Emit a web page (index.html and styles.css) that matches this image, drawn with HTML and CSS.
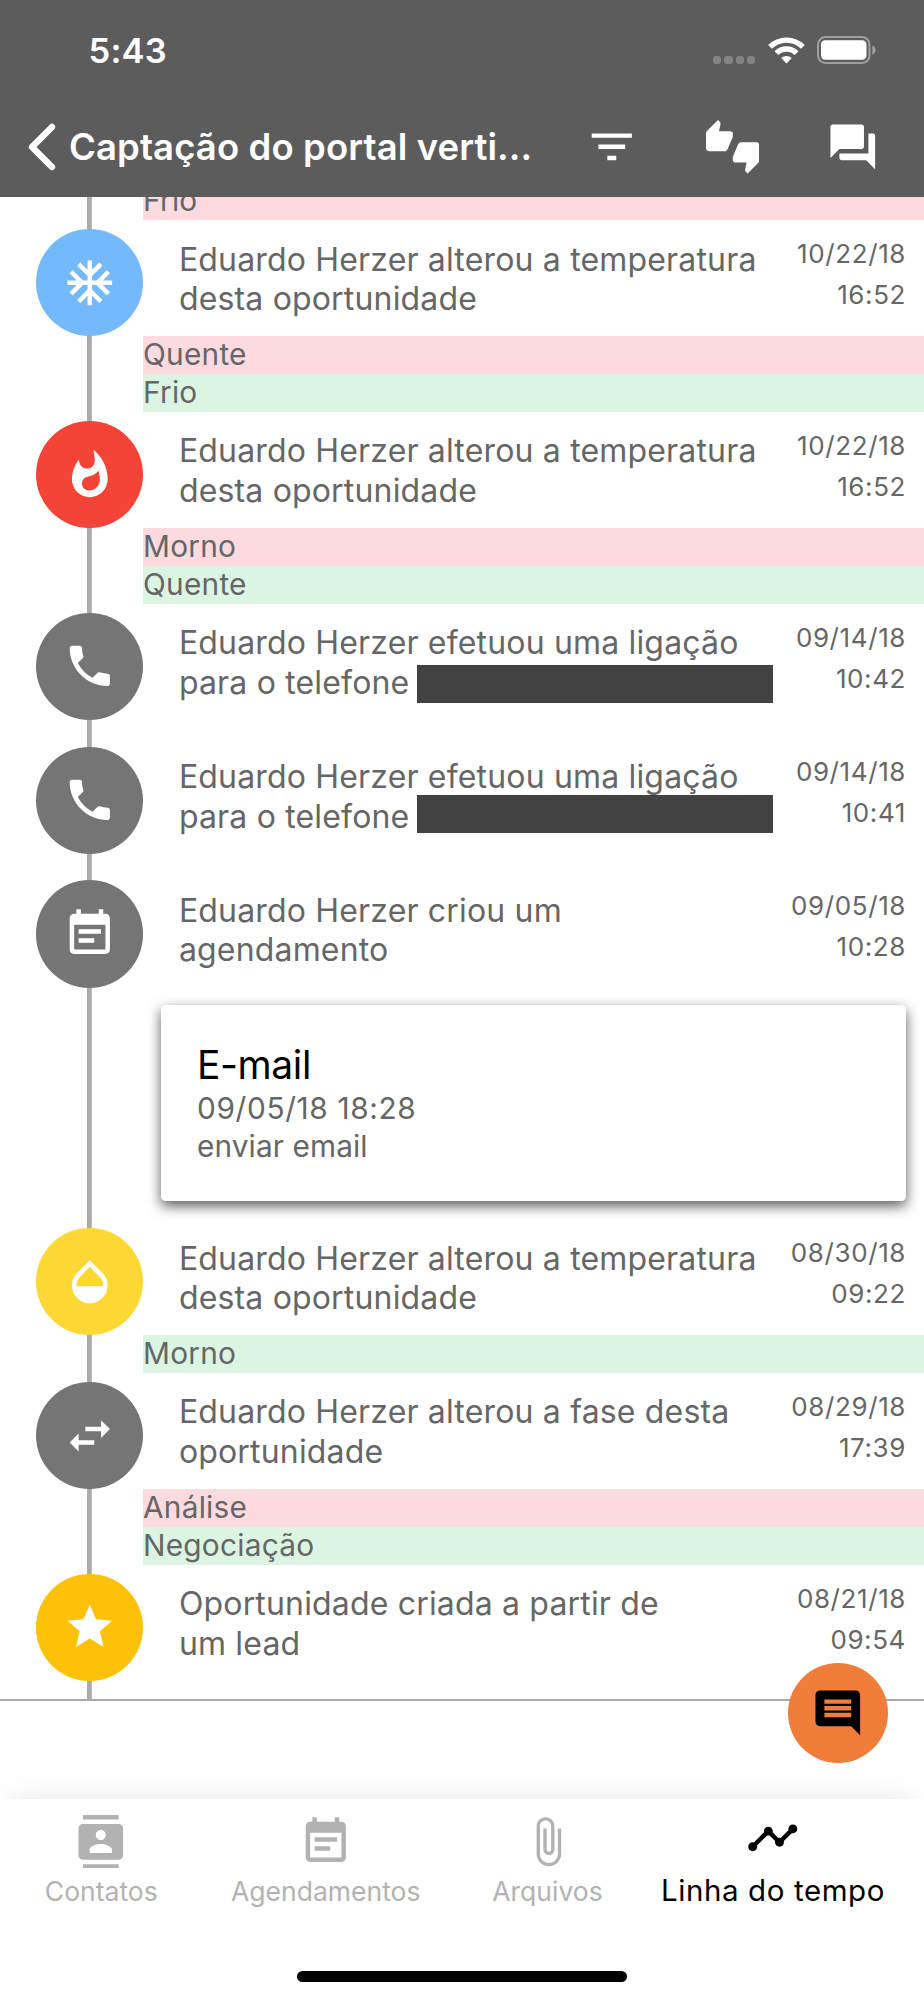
FILE: index.html
```html
<!DOCTYPE html>
<html lang="pt-BR">
<head>
<meta charset="utf-8">
<title>Linha do tempo</title>
<link rel="stylesheet" href="styles.css">
</head>
<body>
<svg class="defs" aria-hidden="true">
  <symbol id="phone" viewBox="0 0 24 24"><path d="M6.62 10.79c1.44 2.83 3.76 5.14 6.59 6.59l2.2-2.2c.27-.27.67-.36 1.02-.24 1.12.37 2.33.57 3.57.57.55 0 1 .45 1 1V20c0 .55-.45 1-1 1-9.39 0-17-7.61-17-17 0-.55.45-1 1-1h3.5c.55 0 1 .45 1 1 0 1.25.2 2.45.57 3.57.11.35.03.74-.25 1.02l-2.2 2.2z"/></symbol>
  <symbol id="note" viewBox="0 0 24 24"><path d="M17 10H7v2h10v-2zM19 3h-1V1h-2v2H8V1H6v2H5c-1.11 0-2 .9-2 2v14c0 1.1.89 2 2 2h14c1.1 0 2-.9 2-2V5c0-1.1-.9-2-2-2zm0 16H5V8h14v11zM14 14H7v2h7v-2z"/></symbol>
</svg>
<div class="screen">
  <header class="header">
    <div class="status">
      <span class="clock">5:43</span>
      <div class="signal"><i></i><i></i><i></i><i></i></div>
      <svg class="wifi" viewBox="0 0 37 27">
        <path d="M2.1 9.9a23.2 23.2 0 0 1 32.8 0M8.4 16.2a14.3 14.3 0 0 1 20.2 0" fill="none" stroke="#fff" stroke-width="5.4"/>
        <path d="M18.5 26.4l-5.3-5.4a7.7 7.7 0 0 1 10.6 0z" fill="#fff"/>
      </svg>
      <svg class="battery" viewBox="0 0 60 28">
        <rect x="1" y="1" width="51.5" height="26" rx="7.5" fill="none" stroke="#9f9f9f" stroke-width="2"/>
        <rect x="4" y="4.2" width="45.5" height="19.6" rx="4.2" fill="#fff"/>
        <path d="M55.3 9.5c4.4 1.8 4.4 7.4 0 9.2z" fill="#9f9f9f"/>
      </svg>
    </div>
    <div class="nav">
      <svg class="back" viewBox="0 0 28 48"><path d="M24 4L4 24l20 20" fill="none" stroke="#fff" stroke-width="6.4" stroke-linecap="round" stroke-linejoin="round"/></svg>
      <h1 class="title">Captação do portal verti...</h1>
      <div class="actions">
        <svg class="icon" viewBox="0 0 24 24"><path d="M10 18h4v-2h-4v2zM3 6v2h18V6H3zm3 7h12v-2H6v2z"/></svg>
        <svg class="icon" viewBox="0 0 24 24"><path d="M12 6c0-.55-.45-1-1-1H5.82l.66-3.18.02-.23c0-.31-.13-.59-.33-.8L5.38 0 .44 4.94C.17 5.21 0 5.59 0 6v6.5c0 .83.67 1.5 1.5 1.5h6.75c.62 0 1.15-.38 1.38-.91l2.26-5.29c.07-.17.11-.36.11-.55V6zm10.5 4h-6.75c-.62 0-1.15.38-1.38.91l-2.26 5.29c-.07.17-.11.36-.11.55V18c0 .55.45 1 1 1h5.18l-.66 3.18-.02.24c0 .31.13.59.33.8l.79.78 4.94-4.94c.27-.27.44-.65.44-1.06v-6.5c0-.83-.67-1.5-1.5-1.5z"/></svg>
        <svg class="icon" viewBox="0 0 24 24"><path d="M21 6h-2v9H6v2c0 .55.45 1 1 1h11l4 4V7c0-.55-.45-1-1-1zm-4 6V3c0-.55-.45-1-1-1H3c-.55 0-1 .45-1 1v14l4-4h10c.55 0 1-.45 1-1z"/></svg>
      </div>
    </div>
  </header>

  <main class="content">
    <div class="timeline">
      <div class="change removed clipped">Frio</div>

      <section class="event with-changes">
        <div class="row">
          <div class="dot cold"><svg class="icon" viewBox="0 0 24 24"><path d="M22 11h-4.17l3.24-3.24-1.41-1.42L15 11h-2V9l4.66-4.66-1.42-1.41L13 6.17V2h-2v4.17L7.76 2.93 6.34 4.34 11 9v2H9L4.34 6.34 2.93 7.76 6.17 11H2v2h4.17l-3.24 3.24 1.41 1.42L9 13h2v2l-4.66 4.66 1.42 1.41L11 17.83V22h2v-4.17l3.24 3.24 1.42-1.41L13 15v-2h2l4.66 4.66 1.41-1.42L17.83 13H22z"/></svg></div>
          <p class="text">Eduardo Herzer alterou a temperatura<br>desta oportunidade</p>
          <time class="when">10/22/18<br>16:52</time>
        </div>
        <div class="change removed">Quente</div>
        <div class="change added">Frio</div>
      </section>

      <section class="event with-changes">
        <div class="row">
          <div class="dot hot"><svg class="icon" viewBox="0 0 24 24"><path d="M13.5.67s.74 2.65.74 4.8c0 2.06-1.35 3.73-3.41 3.73-2.07 0-3.63-1.67-3.63-3.73l.03-.36C5.21 7.51 4 10.62 4 14c0 4.42 3.58 8 8 8s8-3.58 8-8C20 8.61 17.41 3.8 13.5.67zM11.71 19c-1.78 0-3.22-1.4-3.22-3.14 0-1.62 1.05-2.76 2.81-3.12 1.77-.36 3.6-1.21 4.62-2.58.39 1.29.59 2.65.59 4.04 0 2.65-2.15 4.8-4.8 4.8z"/></svg></div>
          <p class="text">Eduardo Herzer alterou a temperatura<br>desta oportunidade</p>
          <time class="when">10/22/18<br>16:52</time>
        </div>
        <div class="change removed">Morno</div>
        <div class="change added">Quente</div>
      </section>

      <section class="event plain">
        <div class="row">
          <div class="dot"><svg class="icon"><use href="#phone"/></svg></div>
          <p class="text">Eduardo Herzer efetuou uma ligação<br>para o telefone <span class="redacted"></span></p>
          <time class="when">09/14/18<br>10:42</time>
        </div>
      </section>

      <section class="event plain">
        <div class="row">
          <div class="dot"><svg class="icon"><use href="#phone"/></svg></div>
          <p class="text">Eduardo Herzer efetuou uma ligação<br>para o telefone <span class="redacted raised"></span></p>
          <time class="when">09/14/18<br>10:41</time>
        </div>
      </section>

      <section class="event with-card">
        <div class="row">
          <div class="dot"><svg class="icon"><use href="#note"/></svg></div>
          <p class="text">Eduardo Herzer criou um<br>agendamento</p>
          <time class="when">09/05/18<br>10:28</time>
        </div>
        <div class="card">
          <h2 class="card-title">E-mail</h2>
          <p class="card-line card-date">09/05/18 18:28</p>
          <p class="card-line">enviar email</p>
        </div>
      </section>

      <section class="event with-changes">
        <div class="row">
          <div class="dot warm"><svg class="icon" viewBox="0 0 24 24"><path d="M17.66 8L12 2.35 6.34 8C4.78 9.56 4 11.64 4 13.64s.78 4.11 2.34 5.67 3.61 2.35 5.66 2.35 4.1-.79 5.66-2.35S20 15.64 20 13.64 19.22 9.56 17.66 8zM6 14c.01-2 .62-3.27 1.76-4.4L12 5.27l4.24 4.38C17.38 10.77 17.99 12 18 14H6z"/></svg></div>
          <p class="text">Eduardo Herzer alterou a temperatura<br>desta oportunidade</p>
          <time class="when">08/30/18<br>09:22</time>
        </div>
        <div class="change added">Morno</div>
      </section>

      <section class="event with-changes">
        <div class="row">
          <div class="dot"><svg class="icon" viewBox="0 0 24 24"><path d="M6.99 11L3 15l3.99 4v-3H14v-2H6.99v-3zM21 9l-3.99-4v3H10v2h7.01v3L21 9z"/></svg></div>
          <p class="text">Eduardo Herzer alterou a fase desta<br>oportunidade</p>
          <time class="when">08/29/18<br>17:39</time>
        </div>
        <div class="change removed">Análise</div>
        <div class="change added">Negociação</div>
      </section>

      <section class="event last">
        <div class="row">
          <div class="dot star"><svg class="icon" viewBox="0 0 24 24"><path d="M12 17.27L18.18 21l-1.64-7.03L22 9.24l-7.19-.61L12 2 9.19 8.63 2 9.24l5.46 4.73L5.82 21z"/></svg></div>
          <p class="text">Oportunidade criada a partir de<br>um lead</p>
          <time class="when">08/21/18<br>09:54</time>
        </div>
      </section>
    </div>
    <button class="fab" aria-label="Comentar"><svg class="icon" viewBox="0 0 24 24"><path d="M21.99 4c0-1.1-.89-2-1.99-2H4c-1.1 0-2 .9-2 2v12c0 1.1.9 2 2 2h14l4 4-.01-18zM18 14H6v-2h12v2zm0-3H6V9h12v2zm0-3H6V6h12v2z"/></svg></button>
  </main>

  <footer class="footer">
    <nav class="tabs">
      <a class="tab"><svg class="icon" viewBox="0 0 24 24"><path d="M20 0H4v2h16V0zM4 24h16v-2H4v2zM20 4H4c-1.1 0-2 .9-2 2v12c0 1.1.9 2 2 2h16c1.1 0 2-.9 2-2V6c0-1.1-.9-2-2-2zm-8 2.75c1.24 0 2.25 1.01 2.25 2.25s-1.01 2.25-2.25 2.25S9.75 10.24 9.75 9 10.76 6.75 12 6.75zM17 17H7v-1.5c0-1.67 3.33-2.5 5-2.5s5 .83 5 2.5V17z"/></svg><span>Contatos</span></a>
      <a class="tab"><svg class="icon"><use href="#note"/></svg><span>Agendamentos</span></a>
      <a class="tab"><svg class="icon" viewBox="0 0 24 24"><path d="M16.5 6v11.5c0 2.21-1.79 4-4 4s-4-1.79-4-4V5c0-1.38 1.12-2.5 2.5-2.5s2.5 1.12 2.5 2.5v10.5c0 .55-.45 1-1 1s-1-.45-1-1V6H10v9.5c0 1.38 1.12 2.5 2.5 2.5s2.5-1.12 2.5-2.5V5c0-2.21-1.79-4-4-4S7 2.79 7 5v12.5c0 3.04 2.46 5.5 5.5 5.5s5.5-2.46 5.5-5.5V6h-1.5z"/></svg><span>Arquivos</span></a>
      <a class="tab active"><svg class="icon" viewBox="0 0 24 24"><path d="M23 8c0 1.1-.9 2-2 2-.18 0-.35-.02-.51-.07l-3.56 3.55c.05.16.07.34.07.52 0 1.1-.9 2-2 2s-2-.9-2-2c0-.18.02-.36.07-.52l-2.55-2.55c-.16.05-.34.07-.52.07s-.36-.02-.52-.07l-4.55 4.56c.05.16.07.33.07.51 0 1.1-.9 2-2 2s-2-.9-2-2 .9-2 2-2c.18 0 .35.02.51.07l4.56-4.55C8.02 9.36 8 9.18 8 9c0-1.1.9-2 2-2s2 .9 2 2c0 .18-.02.36-.07.52l2.55 2.55c.16-.05.34-.07.52-.07s.36.02.52.07l3.55-3.56C19.02 8.35 19 8.18 19 8c0-1.1.9-2 2-2s2 .9 2 2z"/></svg><span>Linha do tempo</span></a>
    </nav>
    <div class="home-indicator"></div>
  </footer>
</div>
</body>
</html>
```

FILE: styles.css
```css
* { box-sizing: border-box; }

body {
  margin: 0;
  background: #fff;
  color: #666;
  font-family: Inter, "Liberation Sans", sans-serif;
}

h1, h2, p { margin: 0; font-weight: 400; }

.defs { display: none; }

.icon {
  display: block;
  flex: none;
  width: 53.6px;
  height: 53.6px;
  fill: currentColor;
}

.screen {
  display: flex;
  flex-direction: column;
  width: 924px;
  height: 2000px;
  overflow: hidden;
}

/* Header */
.header {
  flex: none;
  height: 196.7px;
  background: #5c5c5c;
  color: #fff;
}

.status {
  display: flex;
  height: 100px;
  padding: 0 47px 0 88.5px;
}

.clock {
  flex: 1;
  padding-top: 30px;
  font-size: 34.5px;
  line-height: 42px;
  font-weight: 600;
  letter-spacing: 0.2px;
}

.signal {
  display: flex;
  gap: 3px;
  margin: 55.7px 12.7px 0 0;
}

.signal i {
  width: 8.2px;
  height: 8.2px;
  border-radius: 3px;
  background: #838383;
}

.wifi { width: 37px; height: 27px; margin: 36.6px 12.3px 0 0; }
.battery { width: 60px; height: 28px; margin-top: 36.3px; }

.nav {
  display: flex;
  align-items: center;
  height: 94px;
  padding: 0 44.5px 0 28px;
}

.back { width: 28px; height: 48px; margin-right: 13px; }

.title {
  flex: 1;
  font-size: 36.5px;
  line-height: 48px;
  font-weight: 600;
  letter-spacing: 0.1px;
  white-space: nowrap;
}

.actions { display: flex; gap: 66.8px; }

/* Timeline */
.content {
  position: relative;
  flex: 1;
  min-height: 0;
}

.timeline {
  overflow: hidden;
  border-bottom: 2.2px solid #aaa;
  background: linear-gradient(#aaa, #aaa) 87px 0 / 4.8px 100% no-repeat;
}

.with-changes { padding-bottom: 8.9px; }
.plain { padding-bottom: 26.8px; }
.with-card { padding-bottom: 26.8px; }
.last { padding-bottom: 18px; }

.row {
  display: flex;
  height: 107.1px;
  padding: 0 18px 0 36px;
}

.dot {
  display: flex;
  align-items: center;
  justify-content: center;
  flex: none;
  width: 107.1px;
  height: 107.1px;
  margin-right: 35.8px;
  border-radius: 50%;
  background: #757575;
  color: #fff;
}

.cold { background: #74b9fb; }
.hot { background: #f54337; }
.warm { background: #fdd835; }
.star { background: #ffc107; }

.text {
  flex: 1;
  padding-top: 10.6px;
  font-size: 32px;
  line-height: 39.4px;
  letter-spacing: 0.17px;
  white-space: nowrap;
}

.redacted {
  display: inline-block;
  width: 356px;
  height: 38px;
  margin: 2px 0 0 -2px;
  vertical-align: top;
  background: #424242;
}

.raised { margin-top: -2px; }

.when {
  padding-top: 4.4px;
  font-size: 26px;
  line-height: 41px;
  letter-spacing: 0.6px;
  text-align: right;
  white-space: nowrap;
}

.change {
  height: 37.94px;
  margin-left: 143px;
  font-size: 29.8px;
  line-height: 37.94px;
  letter-spacing: 0.25px;
}

.removed { background: #fcdbe0; }
.added { background: #dcf5e3; }

.clipped { margin-top: -14.6px; margin-bottom: 8.9px; }

.card {
  height: 196px;
  margin: 17.6px 18px 0 161px;
  padding: 35.4px 36px;
  border-radius: 4.5px;
  background: #fff;
  box-shadow: 0 5px 13px rgba(0, 0, 0, 0.65);
}

.card-title {
  color: #000;
  font-size: 39px;
  line-height: 48px;
  letter-spacing: -0.4px;
}

.card-line {
  font-size: 29.8px;
  line-height: 38px;
  letter-spacing: 0.1px;
}

.card-date { letter-spacing: 0.65px; }

.fab {
  position: absolute;
  right: 36px;
  bottom: 35.5px;
  display: flex;
  align-items: center;
  justify-content: center;
  width: 100.2px;
  height: 100.2px;
  padding: 0;
  border: 0;
  border-radius: 50%;
  background: #f07d3a;
  color: #000;
}

/* Tab bar */
.footer {
  flex: none;
  height: 201.2px;
  background: #fff;
  box-shadow: 0 -12px 27px -12px rgba(0, 0, 0, 0.1);
}

.tabs {
  display: grid;
  grid-template-columns: 202.5px 246.5px 197px 254px;
  height: 172px;
}

.tab {
  display: flex;
  flex-direction: column;
  align-items: center;
  padding-top: 15.8px;
  color: #b2b2b2;
  font-size: 26.5px;
  line-height: 32px;
  white-space: nowrap;
}

.tab span { margin-top: 7px; }

.active {
  padding-top: 11.8px;
  color: #000;
  font-size: 29.5px;
  line-height: 36px;
  letter-spacing: 0.6px;
}

.active span { margin-top: 8px; }

.home-indicator {
  width: 330px;
  height: 11px;
  margin: 0 auto;
  border-radius: 6px;
  background: #000;
}
```
